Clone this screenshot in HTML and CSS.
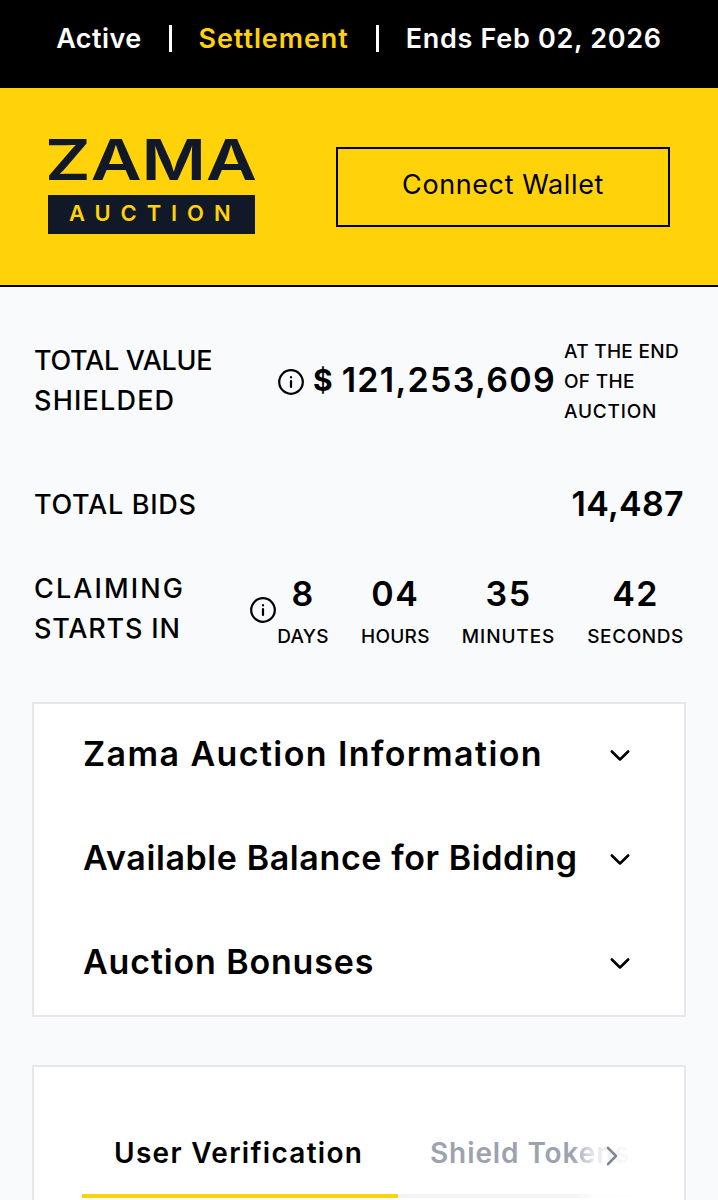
FILE: index.html
```html
<!DOCTYPE html>
<html lang="en">
<head>
    <meta charset="UTF-8">
    <meta name="viewport" content="width=device-width, initial-scale=1.0">
    <title>Zama Auction</title>
    <link rel="stylesheet" href="styles.css">
</head>
<body>
    <div class="status-bar">
        <span class="status-active">Active</span>
        <span class="divider"></span>
        <span class="status-current">Settlement</span>
        <span class="divider"></span>
        <span class="status-ends">Ends Feb 02, 2026</span>
    </div>

    <header>
        <a href="#" class="logo">
            <svg class="logo-name" width="207" height="41" viewBox="0 0 207 41">
                <text x="-3" y="41" textLength="212" lengthAdjust="spacingAndGlyphs">ZAMA</text>
            </svg>
            <span class="logo-sub">AUCTION</span>
        </a>
        <button class="connect">Connect Wallet</button>
    </header>

    <section class="stats">
        <div class="stat stat-value">
            <h2 class="label"><span class="tight">TOTAL VALUE</span><br><span class="wide">SHIELDED</span></h2>
            <div class="value">
                <svg class="info" viewBox="0 0 28 28">
                    <circle cx="14" cy="14" r="11.8"/>
                    <path d="M14 13v6M14 9.2v.2"/>
                </svg>
                <span class="dollar">$</span>
                <span class="number total">121,253,609</span>
                <span class="note">AT THE END<br>OF THE<br><span class="note-wide">AUCTION</span></span>
            </div>
        </div>
        <div class="stat stat-bids">
            <h2 class="label bids-label">TOTAL BIDS</h2>
            <span class="number bids">14,487</span>
        </div>
        <div class="stat stat-timer">
            <h2 class="label"><span class="widest">CLAIMING</span><br><span class="starts">STARTS IN</span></h2>
            <div class="timer">
                <svg class="info" viewBox="0 0 28 28">
                    <circle cx="14" cy="14" r="11.8"/>
                    <path d="M14 13v6M14 9.2v.2"/>
                </svg>
                <div class="unit days"><span class="number">8</span><span class="unit-name">DAYS</span></div>
                <div class="unit hours"><span class="number">04</span><span class="unit-name">HOURS</span></div>
                <div class="unit minutes"><span class="number">35</span><span class="unit-name">MINUTES</span></div>
                <div class="unit seconds"><span class="number">42</span><span class="unit-name">SECONDS</span></div>
            </div>
        </div>
    </section>

    <main>
        <div class="card accordion">
            <div class="accordion-item">
                <h3 class="info-title">Zama Auction Information</h3>
                <svg class="chevron" viewBox="0 0 28 28"><path d="M5.8 9.5l8.2 8 8.2-8"/></svg>
            </div>
            <div class="accordion-item">
                <h3 class="balance-title">Available Balance for Bidding</h3>
                <svg class="chevron" viewBox="0 0 28 28"><path d="M5.8 9.5l8.2 8 8.2-8"/></svg>
            </div>
            <div class="accordion-item">
                <h3 class="bonus-title">Auction Bonuses</h3>
                <svg class="chevron" viewBox="0 0 28 28"><path d="M5.8 9.5l8.2 8 8.2-8"/></svg>
            </div>
        </div>

        <div class="card tabs-card">
            <nav class="tabs">
                <a href="#" class="tab active">User Verification</a>
                <a href="#" class="tab">Shield Tokens</a>
                <!-- fades the overflowing tabs out and hints that they scroll -->
                <span class="tabs-fade">
                    <svg class="chevron next" viewBox="0 0 28 28"><path d="M10 5.8l8 8.2-8 8.2"/></svg>
                </span>
            </nav>
        </div>
    </main>
</body>
</html>
```
FILE: styles.css
```css
* {
    margin: 0;
    padding: 0;
    box-sizing: border-box;
    font-family: Inter, "Liberation Sans", sans-serif;
}
body {
    background: #f9fafc;
    color: #000;
    font-weight: 500;
    height: 1200px;
    display: flex;
    flex-direction: column;
    overflow: hidden;
}
.status-bar {
    display: flex;
    align-items: center;
    justify-content: center;
    gap: 27px;
    height: 88px;
    padding-bottom: 12px;
    background: #000;
    color: #fff;
    font-size: 27px;
    font-weight: 600;
    white-space: nowrap;
}
.status-active {
    letter-spacing: 0.4px;
}
.status-current {
    color: #ffd20a;
    letter-spacing: 0.9px;
}
.status-ends {
    letter-spacing: 0.7px;
}
.divider {
    width: 3px;
    height: 27px;
    background: #fff;
}
header {
    display: flex;
    align-items: center;
    justify-content: space-between;
    height: 199px;
    padding: 0 48px;
    background: #ffd20a;
    border-bottom: 2px solid #000;
}
.logo {
    width: 207px;
    color: #111827;
    text-decoration: none;
}
.logo-name {
    display: block;
    margin-bottom: 15px;
    overflow: visible;
}
.logo-name text {
    font-size: 56px;
    font-weight: 600;
    fill: #111827;
}
.logo-sub {
    display: block;
    height: 39px;
    line-height: 37px;
    padding-left: 21px;
    background: #111827;
    color: #ffd20a;
    font-size: 22px;
    font-weight: 600;
    letter-spacing: 9.9px;
}
.connect {
    width: 334px;
    height: 80px;
    padding-bottom: 4px;
    background: transparent;
    border: 2px solid #000;
    color: #000;
    font-size: 27px;
    letter-spacing: 0.6px;
}
.stats {
    padding: 49px 34px 0;
}
.stat {
    display: flex;
    align-items: center;
    justify-content: space-between;
    white-space: nowrap;
}
.stat-value {
    height: 90px;
}
.stat-bids {
    height: 40px;
    margin-top: 58px;
}
.stat-timer {
    height: 80px;
    margin-top: 45px;
}
.label {
    font-size: 27px;
    font-weight: 500;
    line-height: 40px;
}
.tight {
    letter-spacing: -0.3px;
}
.wide {
    letter-spacing: 1.2px;
}
.widest {
    letter-spacing: 2.1px;
}
.starts {
    letter-spacing: 0.8px;
}
.bids-label {
    padding-top: 1px;
    letter-spacing: 0.7px;
}
.value,
.timer {
    display: flex;
    align-items: center;
}
.info {
    width: 28px;
    height: 28px;
    margin-top: 2px;
    fill: none;
    stroke: #000;
    stroke-width: 2.2;
    stroke-linecap: round;
}
.number {
    font-size: 34px;
    font-weight: 600;
    line-height: 40px;
}
.total {
    margin-top: -2px;
    letter-spacing: 1.3px;
}
.bids {
    letter-spacing: 0.3px;
}
.dollar {
    margin: -2px 9px 0 8px;
    font-size: 30px;
    font-weight: 700;
}
.note {
    width: 120px;
    margin-left: 8px;
    padding-top: 1px;
    font-size: 19px;
    line-height: 30px;
    letter-spacing: 0.3px;
}
.note-wide {
    letter-spacing: 0.8px;
}
.unit {
    display: flex;
    flex-direction: column;
    align-items: center;
    gap: 8px;
    margin-top: 7px;
}
.unit .number {
    letter-spacing: 1.5px;
}
.unit + .unit {
    margin-left: 32px;
}
.unit-name {
    font-size: 19px;
    line-height: 30px;
    letter-spacing: 0.3px;
}
.minutes .unit-name {
    letter-spacing: 0.9px;
}
.seconds .unit-name {
    letter-spacing: 0.6px;
}
main {
    padding: 0 32px;
}
.card {
    background: #fff;
    border: 2px solid #e5e7eb;
}
.accordion {
    height: 315px;
    margin-top: 53px;
    padding: 0 50px 0 49px;
}
.accordion-item {
    display: flex;
    align-items: center;
    justify-content: space-between;
    height: 104px;
}
.accordion-item h3 {
    padding-bottom: 5px;
    font-size: 34px;
    font-weight: 600;
    white-space: nowrap;
}
.info-title {
    letter-spacing: 1.4px;
}
.balance-title {
    letter-spacing: 0.6px;
}
.bonus-title {
    letter-spacing: 0.85px;
}
.chevron {
    width: 28px;
    height: 28px;
    fill: none;
    stroke: #000;
    stroke-width: 2.6;
    stroke-linecap: round;
    stroke-linejoin: round;
}
.tabs-card {
    height: 135px;
    margin-top: 48px;
    padding: 40px 48px 0;
    border-bottom: none;
}
.tabs {
    position: relative;
    display: flex;
    height: 91px;
    overflow: hidden;
}
.tab {
    flex: none;
    height: 91px;
    padding: 2px 32px 0;
    border-bottom: 4px solid #f3f4f6;
    color: #9ca3af;
    font-size: 28px;
    font-weight: 600;
    line-height: 89px;
    letter-spacing: 1.3px;
    text-decoration: none;
    white-space: nowrap;
}
.tab + .tab {
    letter-spacing: 0.9px;
}
.tab.active {
    width: 316px;
    border-color: #ffd20a;
    color: #000;
}
.tabs-fade {
    position: absolute;
    top: 0;
    right: 0;
    display: flex;
    align-items: center;
    justify-content: flex-end;
    width: 64px;
    height: 91px;
    padding: 7px 10px 0 0;
    background: linear-gradient(to right, rgba(255, 255, 255, 0), rgba(255, 255, 255, 0.75) 35%, #fff);
}
.next {
    stroke: #7f8794;
}
```
